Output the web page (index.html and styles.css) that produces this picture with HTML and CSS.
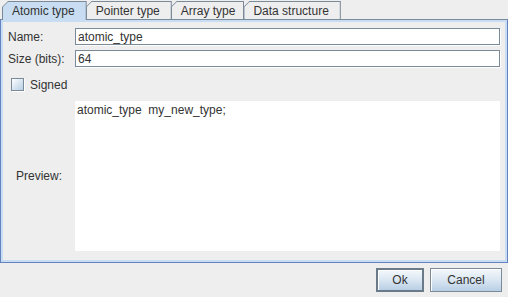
FILE: index.html
```html
<!DOCTYPE html>
<html lang="en">
<head>
  <meta charset="UTF-8" />
  <title>New type</title>
  <link rel="stylesheet" href="styles.css">
</head>
<body>
  <div class="dialog">
    <!-- tab strip -->
    <div class="tabs">
      <div class="tab selected"><span>Atomic type</span></div>
      <div class="tab"><span>Pointer type</span></div>
      <div class="tab"><span>Array type</span></div>
      <div class="tab"><span>Data structure</span></div>
    </div>

    <!-- tab content -->
    <div class="panel">
      <div class="row row-name">
        <label class="label">Name:</label>
        <input class="field" type="text" value="atomic_type">
      </div>
      <div class="row row-size">
        <label class="label">Size (bits):</label>
        <input class="field" type="text" value="64">
      </div>
      <div class="row row-check">
        <span class="checkbox"></span>
        <span class="check-text">Signed</span>
      </div>
      <div class="row row-preview">
        <label class="label label-center">Preview:</label>
        <div class="preview">atomic_type  my_new_type;</div>
      </div>
    </div>

    <!-- buttons -->
    <div class="buttons">
      <button class="btn btn-default">Ok</button>
      <button class="btn btn-cancel">Cancel</button>
    </div>
  </div>
</body>
</html>
```

FILE: styles.css
```css
/* base */
body {
  margin: 0;
  background: #eeeeee;
  font-family: "Liberation Sans", Arial, sans-serif;
  font-size: 12px;
  color: #333333;
}

.dialog {
  width: 508px;
  height: 297px;
  display: flex;
  flex-direction: column;
}

/* tabs */
.tabs {
  display: flex;
  align-items: flex-end;
  height: 19px;
  padding-left: 2px;
  position: relative;
  z-index: 1;
}
.tab {
  height: 18px;
  background: #7a8a99;
  clip-path: polygon(0 6px, 6px 0, 100% 0, 100% 100%, 0 100%);
  padding: 1px 1px 0 1px;
  box-sizing: border-box;
  margin-right: -1px;
}
.tab span {
  display: flex;
  align-items: center;
  height: 17px;
  padding: 0 11px 0 9px;
  background: #eeeeee;
  clip-path: polygon(0 5px, 5px 0, 100% 0, 100% 100%, 0 100%);
  white-space: nowrap;
}
.tab.selected {
  height: 19px;
  margin-bottom: -1px;
}
.tab.selected span {
  height: 18px;
  background: #c8ddf2;
}
.tab:nth-child(2) span { padding-right: 11px; }
.tab:nth-child(3) span { padding-right: 8px; }
.tab:nth-child(4) span { padding-right: 11px; }

/* content panel */
.panel {
  height: 244px;
  box-sizing: border-box;
  border: 1px solid #6382bf;
  border-top-color: #7a8a99;
  box-shadow: inset 0 2px 0 #c8ddf2, inset 2px 0 0 #c8ddf2, inset -2px -2px 0 #c8ddf2;
  padding: 8px 7px 11px 2px;
  display: flex;
  flex-direction: column;
}

.row {
  display: flex;
  align-items: center;
}
.row-size {
  margin-top: 5px;
}
.row-check {
  height: 25px;
  margin-top: 5px;
  padding-left: 8px;
}
.row-preview {
  flex: 1;
  margin-top: 4px;
  align-items: stretch;
}

.label {
  width: 72px;
  flex: none;
  padding-left: 5px;
  box-sizing: border-box;
  white-space: nowrap;
}
.label-center {
  display: flex;
  align-items: center;
  justify-content: center;
  padding-left: 0;
}

.field {
  flex: 1;
  height: 17px;
  box-sizing: border-box;
  margin: 0;
  padding: 0 2px;
  border: 1px solid #7a8a99;
  box-shadow: 1px 1px 0 #ffffff;
  background: #ffffff;
  font-family: inherit;
  font-size: 12px;
  color: #333333;
  outline: none;
}

/* checkbox */
.checkbox {
  width: 13px;
  height: 13px;
  box-sizing: border-box;
  border: 1px solid #7a8a99;
  background: linear-gradient(135deg, #ffffff, #dde8f3 45%, #b8cfe5);
  box-shadow: 1px 1px 0 #ffffff;
}
.check-text {
  margin-left: 6px;
}

/* preview */
.preview {
  flex: 1;
  background: #ffffff;
  padding: 2px 2px;
  white-space: pre;
  color: #333333;
}

/* buttons */
.buttons {
  display: flex;
  justify-content: flex-end;
  gap: 6px;
  padding: 5px 6px 0 0;
}
.btn {
  height: 24px;
  box-sizing: border-box;
  border: 1px solid #7a8a99;
  background: linear-gradient(#f4f8fb, #dde8f3 45%, #b8cfe5);
  box-shadow: inset 1px 1px 0 #ffffff;
  font-family: inherit;
  font-size: 12px;
  color: #333333;
  padding: 0;
}
.btn-default {
  width: 48px;
  border: 2px solid #6b7a89;
}
.btn-cancel {
  width: 72px;
}
```
